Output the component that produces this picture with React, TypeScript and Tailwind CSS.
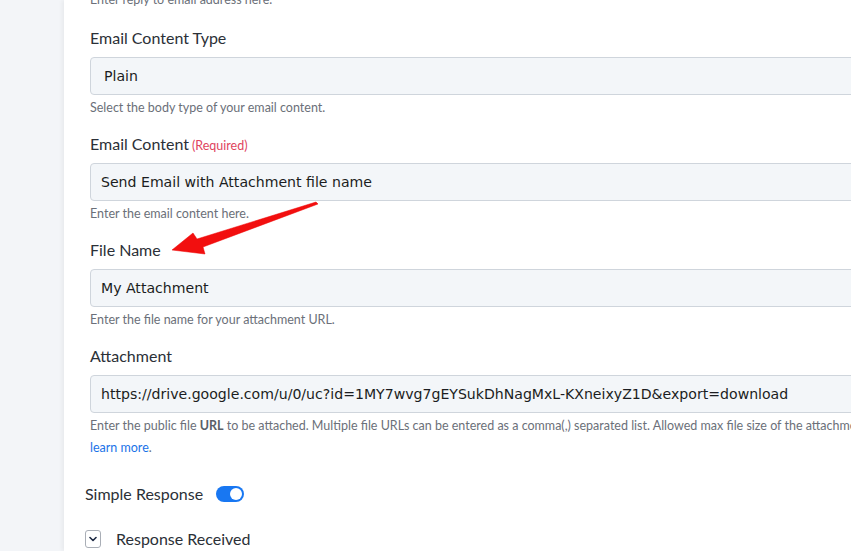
import type { ReactNode } from "react";

const label = "text-[16px] leading-5 text-[#2b3037]";
const help = "mt-[2px] text-[12.5px] leading-[22px] text-[#6b7079]";
const input =
  "h-[38px] w-[820px] rounded-[4px] border border-[#cfd5dc] bg-[#f3f6f9] flex items-center pt-[2px] text-[14.1px] text-[#1b1d21] font-['DejaVu_Sans',sans-serif]";

function Field({ title, extra, value, pad = "pl-[10px]", children }: { title: string; extra?: ReactNode; value: string; pad?: string; children: ReactNode }) {
  return (
    <div className="mb-[15px]">
      <div className={`${label} mb-[9px]`}>
        {title}
        {extra}
      </div>
      <div className={`${input} ${pad}`}>{value}</div>
      <div className={help}>{children}</div>
    </div>
  );
}

export default function App() {
  return (
    <div className="relative flex h-[551px] w-[851px] overflow-hidden bg-[#f3f5f8] font-['Lato',sans-serif]">
      <div className="w-16 shrink-0" />
      <div className="flex-1 bg-white shadow-[-2px_0_4px_rgba(0,0,0,0.05)]">
        <div className="-mt-[13px] pl-[26px]">
          <div className={`${help} mb-[17px]`}>Enter reply to email address here.</div>
          <Field title="Email Content Type" value="Plain" pad="pl-[13px]">
            Select the body type of your email content.
          </Field>
          <Field
            title="Email Content"
            extra={<span className="ml-[3px] text-[12.5px] leading-none text-[#e0445e]">(Required)</span>}
            value="Send Email with Attachment file name"
          >
            Enter the email content here.
          </Field>
          <Field title="File Name" value="My Attachment">
            Enter the file name for your attachment URL.
          </Field>
          <div className="mb-[25px]">
            <div className={`${label} mb-[9px]`}>Attachment</div>
            <div className={`${input} pl-[10px]`}>https://drive.google.com/u/0/uc?id=1MY7wvg7gEYSukDhNagMxL-KXneixyZ1D&amp;export=download</div>
            <div className={`${help} whitespace-nowrap`}>
              Enter the public file <b className="font-bold text-[#5a5f68]">URL</b> to be attached. Multiple file URLs can be entered as a comma(,) separated list. Allowed max file size of the attachment is 10MB.
              <br />
              <a className="text-[#1a73e8]">learn more</a>.
            </div>
          </div>
          <div className="-ml-[5px] flex items-center gap-[13px]">
            <span className={label}>Simple Response</span>
            <span className="flex h-4 w-7 items-center justify-end rounded-full bg-[#1877f2] pr-[2px]">
              <span className="h-3 w-3 rounded-full bg-white" />
            </span>
          </div>
          <div className="-ml-[5px] mt-[25px] flex items-center gap-[15px]">
            <span className="flex h-[18px] w-4 items-center justify-center rounded-[3px] border border-[#a9aeb6]">
              <svg width="8" height="6" viewBox="0 0 8 6" fill="none">
                <path d="M1 1.5L4 4.5L7 1.5" stroke="#1e2a44" strokeWidth="1.6" strokeLinecap="round" strokeLinejoin="round" />
              </svg>
            </span>
            <span className={label}>Response Received</span>
          </div>
        </div>
      </div>
      {/* red callout arrow pointing at the File Name label */}
      <svg className="pointer-events-none absolute left-0 top-0" width="851" height="551" viewBox="0 0 851 551">
        <path d="M172 250 L193 233 L197 239 L316 202 L318 204 L203 247 L205 254 Z" fill="#f20f0f" stroke="#e00" strokeWidth="0.5" strokeLinejoin="round" />
      </svg>
    </div>
  );
}
